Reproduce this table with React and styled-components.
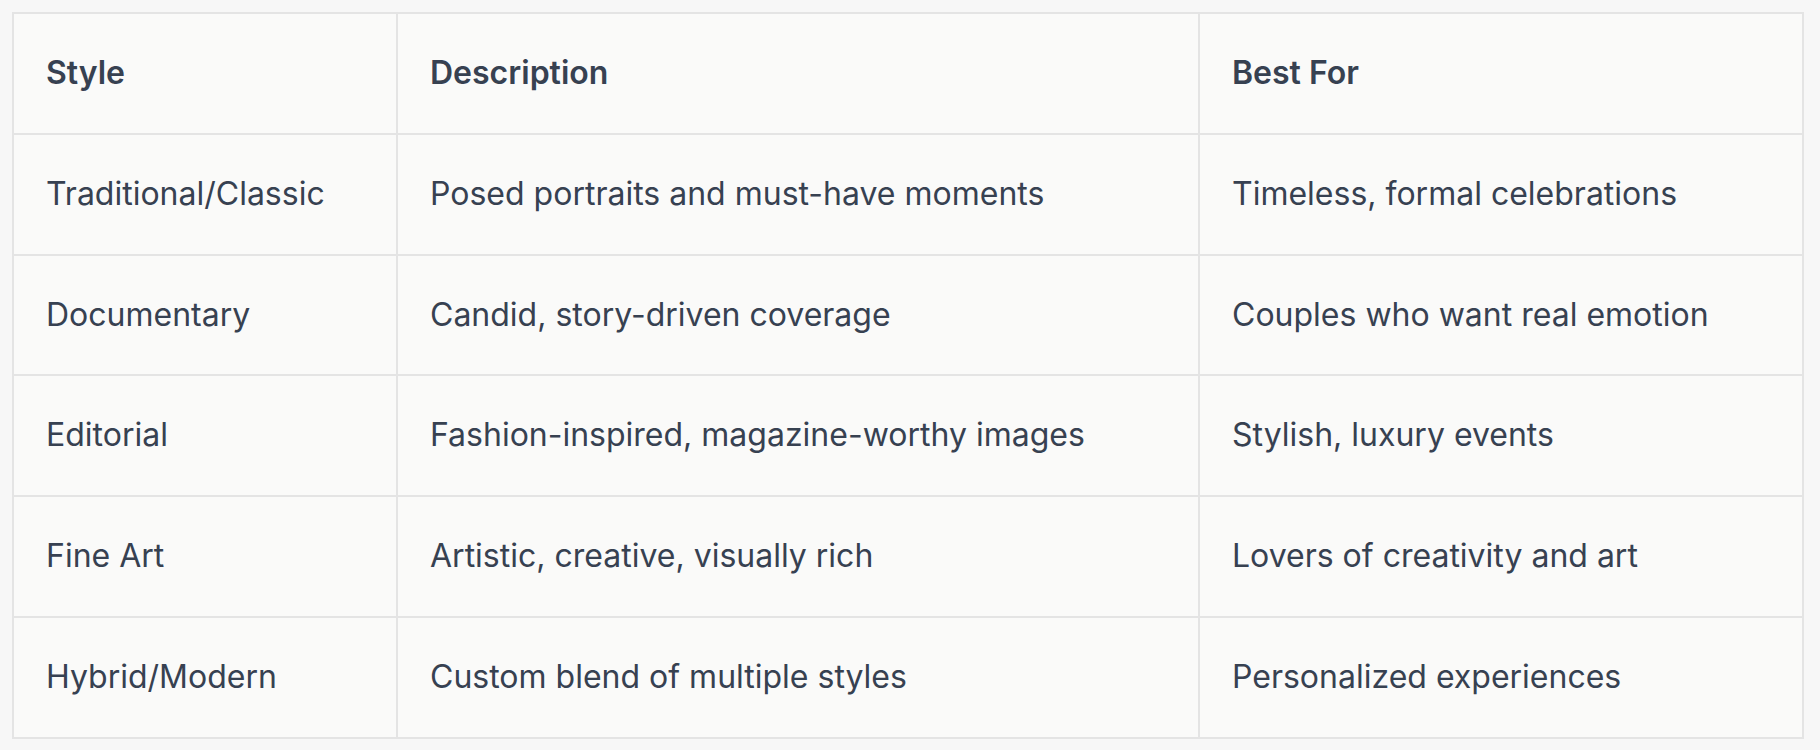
import styled, { createGlobalStyle } from "styled-components";

const GlobalStyle = createGlobalStyle`
  html, body {
    margin: 0;
    padding: 0;
    background: #f7f7f7;
  }
  body {
    font-family: Inter, "Noto Sans", "Liberation Sans", sans-serif;
    color: #374151;
  }
`

const Page = styled.div`
  padding: 12px 16px 12px 12px;
`

const Table = styled.table`
  width: 1792px;
  border-collapse: collapse;
  table-layout: fixed;
  background: #fafaf9;
  border: 2px solid #e4e4e4;
`

const Col = styled.col`
  width: ${props => props.$width}px;
`

const Cell = styled.td`
  border: 2px solid #e4e4e4;
  padding: 32px 32px;
  font-size: 32px;
  line-height: 54.8px;
  font-weight: 400;
  color: #374151;
  text-align: left;
  white-space: nowrap;
`

const HeadCell = styled(Cell).attrs({ as: "th" })`
  font-weight: 600;
`

const columns = [
  { key: "style", label: "Style", width: 384 },
  { key: "description", label: "Description", width: 802 },
  { key: "bestFor", label: "Best For", width: 604 },
];

const rows = [
  {
    style: "Traditional/Classic",
    description: "Posed portraits and must-have moments",
    bestFor: "Timeless, formal celebrations",
  },
  {
    style: "Documentary",
    description: "Candid, story-driven coverage",
    bestFor: "Couples who want real emotion",
  },
  {
    style: "Editorial",
    description: "Fashion-inspired, magazine-worthy images",
    bestFor: "Stylish, luxury events",
  },
  {
    style: "Fine Art",
    description: "Artistic, creative, visually rich",
    bestFor: "Lovers of creativity and art",
  },
  {
    style: "Hybrid/Modern",
    description: "Custom blend of multiple styles",
    bestFor: "Personalized experiences",
  },
];

export default function App() {
  return (
    <>
      <GlobalStyle />
      <Page>
        <Table>
          <colgroup>
            {columns.map(c => <Col key={c.key} $width={c.width} />)}
          </colgroup>
          <thead>
            <tr>
              {columns.map(c => <HeadCell key={c.key}>{c.label}</HeadCell>)}
            </tr>
          </thead>
          <tbody>
            {rows.map(row => (
              <tr key={row.style}>
                {columns.map(c => <Cell key={c.key}>{row[c.key]}</Cell>)}
              </tr>
            ))}
          </tbody>
        </Table>
      </Page>
    </>
  );
}
